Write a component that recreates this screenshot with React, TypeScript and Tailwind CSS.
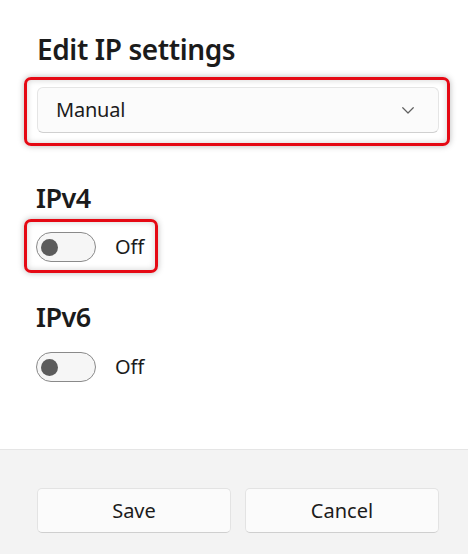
import { ReactNode } from 'react';

const font = { fontFamily: '"Noto Sans", "Open Sans", sans-serif' };

function Highlight({ className, children }: { className: string; children: ReactNode }) {
  return (
    <div
      className={`rounded-[7px] border-[3px] border-[#e50914] shadow-[0_0_6px_rgba(0,0,0,0.28),inset_0_0_6px_rgba(0,0,0,0.18)] ${className}`}
    >
      {children}
    </div>
  );
}

function Toggle() {
  return (
    <div className="flex items-center">
      <div className="flex h-[30px] w-[60px] items-center rounded-full border-[1.5px] border-[#8a8a8a] bg-[#f6f6f6] pl-[4px]">
        <div className="h-[17px] w-[17px] rounded-full bg-[#5c5c5c]" />
      </div>
      <span className="ml-[19px] text-[20px] leading-none text-[#1b1b1b]">Off</span>
    </div>
  );
}

export default function App() {
  return (
    <div className="flex h-[554px] w-[468px] flex-col bg-white text-[#1b1b1b]" style={font}>
      <div className="flex-1 pl-[37px] pr-[29px]">
        <h1 className="mt-[35px] text-[28px] font-semibold leading-none tracking-[-0.4px]">Edit IP settings</h1>

        <Highlight className="-ml-[13px] -mr-[11px] mt-[14px] pb-[10px] pl-[10px] pr-[8px] pt-[7px]">
          <div className="flex h-[46px] items-center justify-between rounded-[6px] border border-[#e5e5e5] border-b-[#d0d0d0] bg-[#fbfbfb] pl-[18px] pr-[24px]">
            <span className="text-[20px] tracking-[-0.2px]">Manual</span>
            <svg width="12" height="7" viewBox="0 0 12 7" fill="none">
              <path d="M0.75 0.75 L6 6 L11.25 0.75" stroke="#5f5f5f" strokeWidth="1.2" strokeLinecap="round" strokeLinejoin="round" />
            </svg>
          </div>
        </Highlight>

        <h2 className="-ml-px mt-[38px] text-[27px] font-semibold leading-none tracking-[-0.5px]">IPv4</h2>
        <Highlight className="-ml-[13px] mt-[8px] w-[134px] pb-[8px] pl-[9px] pt-[10px]">
          <Toggle />
        </Highlight>

        <h2 className="-ml-px mt-[30px] text-[27px] font-semibold leading-none tracking-[-0.5px]">IPv6</h2>
        <div className="-ml-px mt-[22px]">
          <Toggle />
        </div>
      </div>

      <div className="flex h-[105px] gap-[14px] border-t border-[#e5e5e5] bg-[#f3f3f3] pl-[37px] pr-[29px] pt-[38px]">
        <button className="h-[45px] flex-1 rounded-[5px] border border-[#e3e3e3] border-b-[#cfcfcf] bg-[#fbfbfb] text-[20px]">
          Save
        </button>
        <button className="h-[45px] flex-1 rounded-[5px] border border-[#e3e3e3] border-b-[#cfcfcf] bg-[#fbfbfb] text-[20px]">
          Cancel
        </button>
      </div>
    </div>
  );
}
